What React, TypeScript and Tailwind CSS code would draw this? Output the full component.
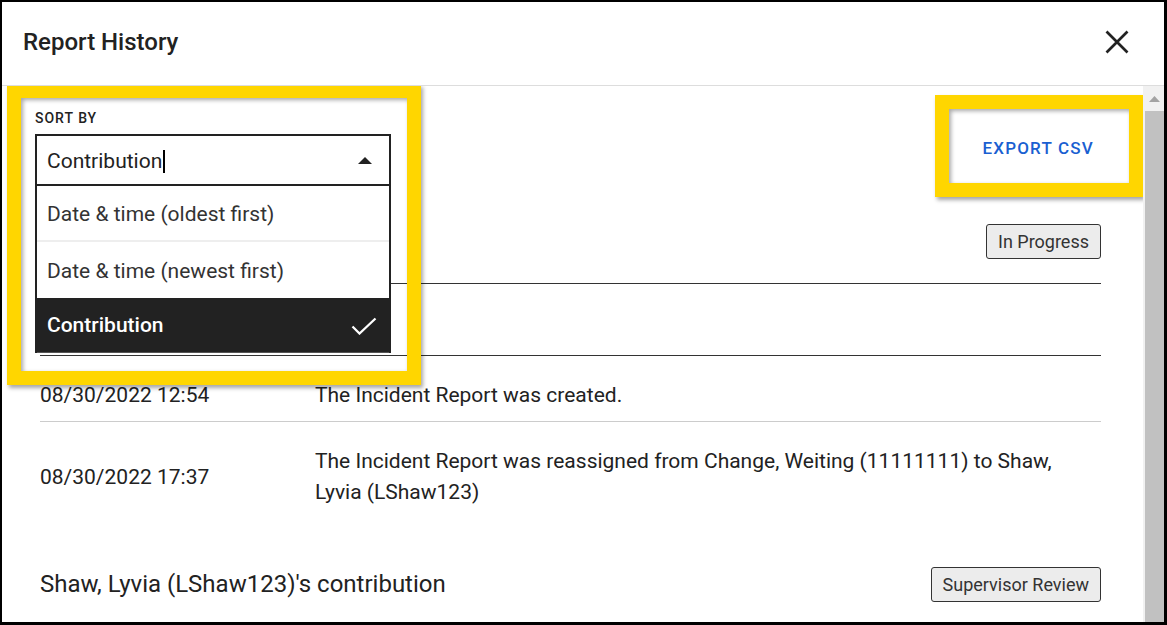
import React from 'react'

const OPTIONS = [
  { label: 'Date & time (oldest first)', selected: false },
  { label: 'Date & time (newest first)', selected: false },
  { label: 'Contribution', selected: true },
]

const ROWS = [
  { date: '08/30/2022 12:54', text: 'The Incident Report was created.' },
  {
    date: '08/30/2022 17:37',
    text: 'The Incident Report was reassigned from Change, Weiting (11111111) to Shaw, Lyvia (LShaw123)',
  },
]

function Badge({ label }: { label: string }) {
  return (
    <span className="flex h-[35px] items-center rounded-[3px] border border-[#333] bg-[#ececec] px-[11px] text-[18px] text-[#333]">
      {label}
    </span>
  )
}

function SortSelect() {
  return (
    <div className="ml-[-5px] w-[356px]">
      <div className="mb-[6px] text-[14px] font-medium leading-[20px] tracking-[1px] text-[#222]">SORT BY</div>
      <div className="relative">
        <div className="flex h-[52px] items-center justify-between border-2 border-[#222] bg-white pl-[10px] pr-[17px]">
          <span className="flex items-center pt-[3px] text-[21px] text-[#222]">
            Contribution
            <span className="ml-px inline-block h-[23px] w-[2px] bg-black" />
          </span>
          <svg width="14" height="7" viewBox="0 0 14 7">
            <polygon points="0,7 7,0 14,7" fill="#222" />
          </svg>
        </div>

        {/* open menu */}
        <ul className="absolute left-0 right-0 top-full z-20 border-x-2 border-[#222] bg-white">
          {OPTIONS.map((o, i) => (
            <li
              key={o.label}
              className={
                o.selected
                  ? 'flex h-[55px] items-center justify-between border-b border-[#555] bg-[#222] pl-[10px] pr-[12px] pt-[2px] text-[21px] font-medium text-white'
                  : 'flex h-[56px] items-center pl-[10px] pt-[3px] text-[21px] text-[#333] ' +
                    (i === 0 ? 'border-b-2 border-[#eee]' : 'border-b-0')
              }
            >
              {o.label}
              {o.selected && (
                <svg width="26" height="18" viewBox="0 0 26 18">
                  <polyline points="1.5,9.5 8.5,16.5 24.5,1.5" fill="none" stroke="#fff" strokeWidth="2.3" />
                </svg>
              )}
            </li>
          ))}
        </ul>
      </div>
    </div>
  )
}

export default function App() {
  return (
    <div className="flex h-[625px] w-[1167px] flex-col overflow-hidden border-b-[3px] border-l-2 border-r-[3px] border-t-2 border-black bg-white font-['Roboto',sans-serif] text-[#222]">
      {/* Header */}
      <div className="flex h-[84px] shrink-0 items-center justify-between border-b border-[#ddd] pb-[3px] pl-[21px] pr-[35px]">
        <h1 className="text-[24px] font-medium text-[#222]">Report History</h1>
        <svg width="24" height="24" viewBox="0 0 24 24">
          <path d="M1.5 1.5 L22.5 22.5 M22.5 1.5 L1.5 22.5" stroke="#222" strokeWidth="2.7" />
        </svg>
      </div>

      <div className="flex min-h-0 flex-1">
        <div className="relative flex-1 overflow-hidden">
          <div className="pl-[38px] pr-[42px]">
            {/* Top controls */}
            <div className="flex items-start justify-between pt-[22px]">
              <SortSelect />
              <button className="mt-[23px] h-[36px] px-[7px] text-[17px] font-medium tracking-[1.2px] text-[#1a5fd1]">
                EXPORT CSV
              </button>
            </div>

            {/* Section 1 (title hidden under the open menu) */}
            <div className="mt-[38px] flex items-center justify-end border-b border-[#333] pb-[24px]">
              <Badge label="In Progress" />
            </div>
            <div className="h-[72px] border-b border-[#333]" />
            {ROWS.map((r, i) => (
              <div
                key={r.date}
                className={
                  'grid grid-cols-[275px_1fr] items-center pb-[10px] pt-[24px] text-[21px] leading-[31px] text-[#222] ' +
                  (i === 0 ? 'border-b border-[#ccc]' : '')
                }
              >
                <span>{r.date}</span>
                <span className="pr-[40px]">{r.text}</span>
              </div>
            ))}

            {/* Section 2 */}
            <div className="mt-[48px] flex items-center justify-between">
              <h2 className="text-[24px]">Shaw, Lyvia (LShaw123)'s contribution</h2>
              <Badge label="Supervisor Review" />
            </div>
          </div>

          {/* annotation frames */}
          <div className="pointer-events-none absolute left-[5px] top-[-2px] z-30 h-[301px] w-[414px] border-[14px] border-[#ffd600] shadow-[2px_3px_4px_rgba(0,0,0,0.35),inset_2px_2px_4px_rgba(0,0,0,0.35)]" />
          <div className="pointer-events-none absolute right-0 top-[9px] z-30 h-[102px] w-[208px] border-[14px] border-[#ffd600] shadow-[2px_3px_4px_rgba(0,0,0,0.35),inset_2px_2px_4px_rgba(0,0,0,0.35)]" />
        </div>

        {/* Scrollbar */}
        <div className="flex w-[21px] shrink-0 flex-col bg-[#f1f1f1] pl-[2px]">
          <div className="flex h-[25px] items-center justify-center">
            <svg width="11" height="6" viewBox="0 0 11 6">
              <polygon points="0,6 5.5,0 11,6" fill="#a3a3a3" />
            </svg>
          </div>
          <div className="flex-1 bg-[#c1c1c1]" />
        </div>
      </div>
    </div>
  )
}
